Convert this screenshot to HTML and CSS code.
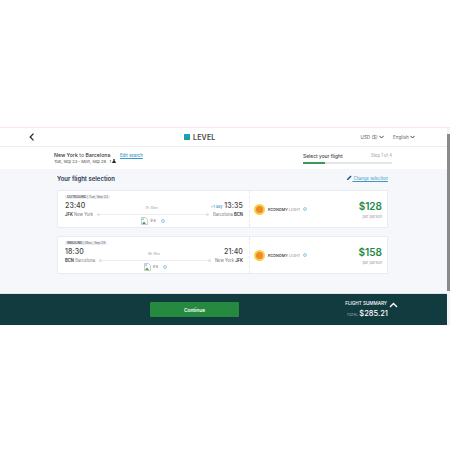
FILE: index.html
```html
<!DOCTYPE html>
<html lang="en">
<head>
  <meta charset="UTF-8">
  <meta name="viewport" content="width=device-width, initial-scale=1.0">
  <title>Flight selection</title>
  <link rel="stylesheet" href="styles.css">
</head>
<body>
  <div class="frame">
    <div class="page">
      <header class="topbar">
        <svg class="back" width="6" height="8" viewBox="0 0 6 8"><path d="M4.5 .7 1.2 4l3.3 3.3" fill="none" stroke="#222" stroke-width="1.2"/></svg>
        <div class="logo">
          <svg width="6" height="6" viewBox="0 0 6 6"><rect width="6" height="3" fill="#1c9cd8"/><rect y="3" width="6" height="3" fill="#1aa57f"/></svg>
          <span>LEVEL</span>
        </div>
        <div class="top-menu">
          <span class="menu-item">USD ($) <svg width="5" height="4" viewBox="0 0 5 4"><path d="M.4 .8 2.5 3 4.6 .8" fill="none" stroke="#333" stroke-width=".9"/></svg></span>
          <span class="menu-item">English <svg width="5" height="4" viewBox="0 0 5 4"><path d="M.4 .8 2.5 3 4.6 .8" fill="none" stroke="#333" stroke-width=".9"/></svg></span>
        </div>
      </header>

      <section class="searchbar">
        <div class="trip">
          <div class="route"><b>New York</b> to <b>Barcelona</b></div>
          <div class="dates">Tue, Sep 23 - Mon, Sep 29 &nbsp; 1 <svg width="4" height="4" viewBox="0 0 4 4"><circle cx="2" cy="1" r=".9" fill="#222"/><path d="M.2 4c0-1.4.7-2 1.8-2s1.8.6 1.8 2z" fill="#222"/></svg></div>
        </div>
        <a class="edit-link">Edit search</a>
        <div class="steps">
          <div class="steps-text"><b>Select your flight</b><span>Step 1 of 4</span></div>
          <div class="progress"><div class="progress-fill"></div></div>
        </div>
      </section>

      <main class="content">
        <div class="content-head">
          <h1>Your flight selection</h1>
          <a class="change-link"><svg width="5" height="5" viewBox="0 0 5 5"><path d="M0 5V3.9L3.5.4l1.1 1.1L1.1 5z" fill="#15609b"/></svg> Change selection</a>
        </div>

        <div class="card">
          <div class="leg">
            <div class="leg-label"><span class="tag"><b>OUTBOUND</b> | Tue, Sep 23</span></div>
            <div class="times">
              <span class="time">23:40</span>
              <span class="duration duration-shift">7h 55m</span>
              <span class="time"><em>+1 day</em> 13:35</span>
            </div>
            <div class="airports">
              <span class="place"><b>JFK</b> New York</span>
              <span class="line"></span>
              <span class="place">Barcelona <b>BCN</b></span>
            </div>
            <div class="operator">
              <svg class="broken" width="7" height="8" viewBox="0 0 7 8"><path d="M.5.5h4l2 2v5h-6z" fill="#fff" stroke="#aaa" stroke-width=".6"/><path d="M1 7l2-2.5L5 7z" fill="#4a9e4a"/><rect x="1.2" y="1.4" width="2" height="1.6" fill="#9cc0e8"/></svg>
              <span class="flight-no">IF6</span>
              <span class="info"></span>
            </div>
          </div>
          <div class="fare">
            <span class="sun"></span>
            <span class="fare-name"><b>ECONOMY</b> LIGHT</span>
            <span class="info"></span>
            <div class="price"><strong>$128</strong><small>per person</small></div>
          </div>
        </div>

        <div class="card">
          <div class="leg">
            <div class="leg-label"><span class="tag"><b>INBOUND</b> | Mon, Sep 29</span></div>
            <div class="times">
              <span class="time">18:30</span>
              <span class="duration">9h 10m</span>
              <span class="time">21:40</span>
            </div>
            <div class="airports">
              <span class="place"><b>BCN</b> Barcelona</span>
              <span class="line"></span>
              <span class="place">New York <b>JFK</b></span>
            </div>
            <div class="operator operator-shift">
              <svg class="broken" width="7" height="8" viewBox="0 0 7 8"><path d="M.5.5h4l2 2v5h-6z" fill="#fff" stroke="#aaa" stroke-width=".6"/><path d="M1 7l2-2.5L5 7z" fill="#4a9e4a"/><rect x="1.2" y="1.4" width="2" height="1.6" fill="#9cc0e8"/></svg>
              <span class="flight-no">IF6</span>
              <span class="info"></span>
            </div>
          </div>
          <div class="fare">
            <span class="sun"></span>
            <span class="fare-name"><b>ECONOMY</b> LIGHT</span>
            <span class="info"></span>
            <div class="price"><strong>$158</strong><small>per person</small></div>
          </div>
        </div>
      </main>

      <footer class="bottombar">
        <button class="continue">Continue</button>
        <div class="summary">
          <div class="summary-title">FLIGHT SUMMARY <svg width="9" height="6" viewBox="0 0 9 6"><path d="M1 5 4.5 1.5 8 5" fill="none" stroke="#fff" stroke-width="1.4"/></svg></div>
          <div class="summary-total"><small>TOTAL</small> <b>$285.21</b></div>
        </div>
      </footer>
    </div>
    <div class="scrollbar"><div class="thumb"></div></div>
  </div>
</body>
</html>
```

FILE: styles.css
```css
* {
  box-sizing: border-box;
}
body {
  margin: 0;
  background-color: #fff;
  font-family: 'Inter', 'Liberation Sans', sans-serif;
  color: #222;
}
.frame {
  display: flex;
  width: 450px;
  height: 198px;
  margin-top: 127px;
  border-top: 1px solid #fbe6e6;
}
.page {
  display: flex;
  flex-direction: column;
  flex: 1;
  min-width: 0;
}
.scrollbar {
  width: 3px;
  padding-top: 6px;
  background-color: #f4f4f4;
}
.thumb {
  height: 157px;
  background-color: #8a8a8a;
}
.topbar {
  display: flex;
  align-items: center;
  height: 19px;
  padding-left: 29px;
  border-bottom: 1px solid #eceef2;
}
.logo {
  display: flex;
  align-items: center;
  gap: 3px;
  margin-left: 149px;
  font-size: 7px;
  font-weight: 600;
  letter-spacing: .2px;
  color: #444;
}
.top-menu {
  display: flex;
  gap: 9px;
  margin-left: auto;
  margin-right: 32px;
}
.menu-item {
  font-size: 4.6px;
  color: #666;
}
.searchbar {
  display: flex;
  align-items: center;
  height: 22px;
  padding-left: 54px;
  background-color: #fff;
}
.trip {
  width: 66px;
}
.route {
  font-size: 5.2px;
  color: #555;
}
.route b {
  color: #333;
  font-weight: 500;
}
.dates {
  margin-top: 1px;
  font-size: 4.1px;
  color: #444;
}
.edit-link {
  margin-bottom: 5px;
  font-size: 4.3px;
  font-weight: 500;
  color: #3a9ac8;
  text-decoration: underline;
}
.steps {
  width: 89px;
  margin-left: auto;
  margin-right: 55px;
}
.steps-text {
  display: flex;
  justify-content: space-between;
  align-items: center;
  font-size: 4.2px;
  color: #999;
}
.steps-text b {
  font-size: 4.9px;
  font-weight: 500;
  color: #444;
}
.progress {
  height: 2px;
  margin-top: 3px;
  background-color: #e3e5e8;
}
.progress-fill {
  width: 25%;
  height: 100%;
  background-color: #3a9a56;
}
.content {
  flex: 1;
  padding: 0 59px 0 57px;
  background-color: #f6f7fa;
}
.content-head {
  display: flex;
  justify-content: space-between;
  align-items: center;
  height: 21px;
  padding-bottom: 3px;
}
h1 {
  margin: 0;
  font-size: 6px;
  font-weight: 600;
  color: #2a3550;
}
.change-link {
  font-size: 4.2px;
  color: #3a9ac8;
  text-decoration: underline;
}
.card {
  display: flex;
  height: 38px;
  margin-bottom: 8px;
  background-color: #fff;
  border: 1px solid #e8ebf3;
  border-radius: 1px;
}
.leg {
  width: 192px;
  padding: 3px 6px 0 7px;
  border-right: 1px dashed #e8eaf0;
}
.leg-label {
  display: flex;
  align-items: center;
  height: 6px;
}
.tag {
  padding: 0 2px;
  font-size: 3.3px;
  background-color: #eef0f6;
  color: #666;
}
.tag b {
  color: #333;
  font-weight: 500;
}
.times {
  display: flex;
  justify-content: space-between;
  align-items: center;
  height: 10px;
}
.time {
  font-size: 7px;
  font-weight: 500;
  letter-spacing: .1px;
  color: #444;
}
.time em {
  font-size: 3.8px;
  font-style: normal;
  font-weight: 500;
  letter-spacing: 0;
  color: #3a9ac8;
}
.duration {
  margin-top: 5px;
  font-size: 3.5px;
  color: #999;
}
.duration-shift {
  margin-left: 7px;
}
.airports {
  display: flex;
  align-items: center;
  gap: 4px;
  height: 7px;
  margin-top: 1px;
}
.place {
  font-size: 4.2px;
  color: #777;
}
.place b {
  font-weight: 600;
  color: #333;
}
.line {
  position: relative;
  flex: 1;
  height: 1px;
  margin: 0 2px;
  background-color: #eceef2;
}
.line::before,
.line::after {
  content: "";
  position: absolute;
  top: -1px;
  width: 3px;
  height: 3px;
  border-radius: 50%;
  background-color: #dfe2e8;
}
.line::before {
  left: -2px;
}
.line::after {
  right: -2px;
}
.operator {
  display: flex;
  justify-content: center;
  align-items: center;
  gap: 2px;
  height: 8px;
  margin-top: -1px;
  padding-right: 2px;
}
.operator-shift {
  padding-right: 0;
  padding-left: 3px;
}
.flight-no {
  font-size: 3.5px;
  color: #666;
}
.info {
  display: inline-block;
  width: 4px;
  height: 4px;
  margin-left: 3px;
  border: 1px solid #9ccfea;
  border-radius: 50%;
  background-color: #e4f1f8;
}
.fare {
  display: flex;
  align-items: center;
  flex: 1;
  padding: 0 5px 0 4px;
}
.sun {
  width: 11px;
  height: 11px;
  margin-right: 3px;
  border: 2px solid #f9cf45;
  border-radius: 50%;
  background-color: #f0882d;
}
.fare-name {
  font-size: 3.8px;
  color: #888;
}
.fare-name b {
  color: #333;
  font-weight: 500;
}
.price {
  display: flex;
  flex-direction: column;
  align-items: flex-end;
  margin-left: auto;
}
.price strong {
  font-size: 10px;
  font-weight: 600;
  color: #1d8a45;
}
.price small {
  margin-top: 2px;
  font-size: 3.8px;
  color: #999;
}
.bottombar {
  display: flex;
  align-items: center;
  height: 32px;
  padding-left: 150px;
  background-color: #123b40;
  border-top: 1px solid #dfe2e6;
}
.continue {
  width: 89px;
  height: 15px;
  padding: 0;
  font-family: inherit;
  font-size: 4.8px;
  font-weight: 600;
  color: #fff;
  background-color: #25893f;
  border: none;
  border-radius: 1px;
}
.summary {
  margin-left: auto;
  margin-right: 59px;
  color: #fff;
  text-align: right;
  font-size: 5px;
  line-height: 1;
}
.summary-title {
  display: flex;
  justify-content: flex-end;
  align-items: center;
  gap: 2px;
  margin-right: -10px;
  margin-bottom: 2px;
  font-size: 4.6px;
  font-weight: 500;
}
.summary-total b {
  font-size: 7.5px;
  font-weight: 500;
}
.summary-total small {
  font-size: 3.5px;
  color: #a9bcbe;
}
```
